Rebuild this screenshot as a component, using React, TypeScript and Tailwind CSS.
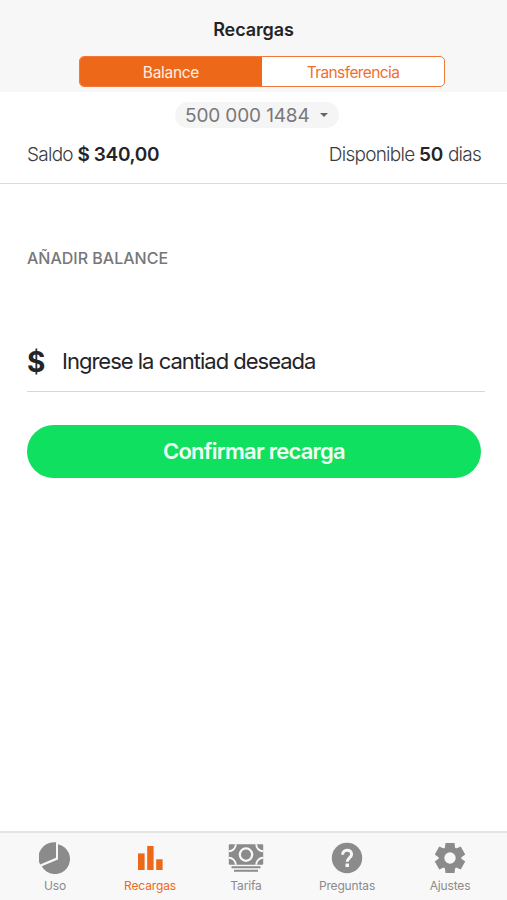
import type { ReactNode } from "react";

function PieIcon() {
  return (
    <svg width="32" height="32" viewBox="0 0 32 32" fill="currentColor">
      <path d="M17 .3V15.800L1.100 22.500A15.500 15.500 0 0 1 17 .3Z" />
      <path d="M19 2.200A15.100 15.100 0 1 1 2.700 24.300L19 17.400Z" />
    </svg>
  );
}

function BarsIcon() {
  return (
    <svg width="26" height="32" viewBox="0 0 26 32" fill="currentColor">
      <rect x="1" y="11.400" width="6.600" height="16.600" />
      <rect x="10.200" y="4" width="6.400" height="24" />
      <rect x="19.200" y="17.300" width="6.400" height="10.700" />
    </svg>
  );
}

function MoneyIcon() {
  return (
    <svg width="36" height="32" viewBox="0 0 36 32" fill="none">
      <clipPath id="note">
        <rect x=".8" y="2.300" width="34.400" height="20.500" rx="1" />
      </clipPath>
      <g clipPath="url(#note)">
        <rect width="36" height="24" fill="currentColor" />
        <g stroke="#f8f8f8" strokeWidth="1.900">
          <circle cx="18" cy="12.600" r="6.200" strokeWidth="2.300" />
          <circle cx=".8" cy="2.300" r="7" />
          <circle cx="35.200" cy="2.300" r="7" />
          <circle cx=".8" cy="22.800" r="7" />
          <circle cx="35.200" cy="22.800" r="7" />
        </g>
      </g>
      <path d="M3.500 25.200H32.500M6 28.800H30" stroke="currentColor" strokeWidth="2.100" />
    </svg>
  );
}

function HelpIcon() {
  return (
    <svg width="32" height="32" viewBox="0 0 32 32" fill="none">
      <circle cx="16" cy="16" r="15.200" fill="currentColor" />
      <path d="M11.600 12.700C11.600 6.700 20.600 6.700 20.600 12.300C20.600 15.700 16.200 16 16.200 19.800" stroke="#f8f8f8" strokeWidth="3" />
      <rect x="14.500" y="21.500" width="3.500" height="3.400" rx=".5" fill="#f8f8f8" />
    </svg>
  );
}

function GearIcon() {
  return (
    <svg width="32" height="32" viewBox="-16 -16 32 32" fill="currentColor">
      <circle r="11.200" />
      {[0, 60, 120, 180, 240, 300].map((a) => (
        <path key={a} d="M-5.300-9L-4.500-15H4.500L5.300-9Z" transform={`rotate(${a})`} />
      ))}
      <circle r="5.700" fill="#f8f8f8" />
    </svg>
  );
}

function Tab({ icon, label, className }: { icon: ReactNode; label: string; className: string }) {
  return (
    <button className={`flex flex-col items-center ${className}`}>
      {icon}
      <span className="mt-[3px] text-[12px] leading-[18px] tracking-[-0.15px] whitespace-nowrap">{label}</span>
    </button>
  );
}

export default function App() {
  return (
    <div className="flex h-[900px] w-[507px] flex-col bg-white font-['Inter',sans-serif] text-[#242428]">
      <header className="flex h-[92px] flex-col bg-[#f7f7f7] pt-[18px]">
        <h1 className="text-center text-[18px] leading-6 font-semibold tracking-[-0.1px]">Recargas</h1>
        <div className="mt-[14px] ml-[79px] flex h-[31px] w-[366px] overflow-hidden rounded-[5px] border-[1.500px] border-[#f07838] bg-white text-[15.500px]">
          <button className="w-[182px] bg-[#ee681a] pt-[2px] tracking-[-0.300px] text-[#fff0e5]">Balance</button>
          <button className="flex-1 pt-[2px] tracking-[-0.600px] text-[#f07030]">Transferencia</button>
        </div>
      </header>
      <section className="flex h-[92px] flex-col border-b border-[#dcdcdc] pt-[10px]">
        <button className="ml-[175px] flex h-[26px] w-[164px] items-center rounded-full bg-[#f5f5f5] pl-[10px] text-[19px] tracking-[-0.130px] whitespace-nowrap text-[#78787a]">
          <span className="pt-[2px]">500 000 1484</span>
          <span className="ml-[10px] border-x-4 border-t-4 border-x-transparent border-t-[#666]" />
        </button>
        <div className="mt-[13px] flex justify-between pr-[26px] pl-[27px] text-[19px] leading-7 font-light tracking-[-0.750px] text-[#3c3c40]">
          <p>Saldo <b className="font-semibold tracking-[-0.350px] text-[#242428]">$ 340,00</b></p>
          <p>Disponible <b className="font-semibold tracking-[-0.100px] text-[#242428]">50</b> dias</p>
        </div>
      </section>
      <main className="flex-1 pt-[62px] pr-[22px] pl-[27px]">
        <h2 className="text-[16px] leading-6 font-medium text-[#77777a]">AÑADIR BALANCE</h2>
        <div className="mt-[62px] flex h-[60px] items-center border-b border-[#d8d8d8]">
          <span className="w-[35px] text-[28px] font-bold">$</span>
          <span className="text-[22px] tracking-[-1px] whitespace-nowrap">Ingrese la cantiad deseada</span>
        </div>
        <button className="mt-[33px] h-[53px] w-[454px] rounded-full bg-[#10e060] text-[22px] font-semibold tracking-[-0.750px] text-[#f0fff5]">Confirmar recarga</button>
      </main>
      <nav className="flex h-[69px] border-t-2 border-[#e4e4e4] bg-[#f8f8f8] pt-[9px] pl-[15px] text-[#8b8b8b]">
        <Tab className="w-[80px]" icon={<PieIcon />} label="Uso" />
        <Tab className="w-[110px] text-[#ee681a]" icon={<BarsIcon />} label="Recargas" />
        <Tab className="w-[82px]" icon={<MoneyIcon />} label="Tarifa" />
        <Tab className="w-[120px]" icon={<HelpIcon />} label="Preguntas" />
        <Tab className="w-[86px]" icon={<GearIcon />} label="Ajustes" />
      </nav>
    </div>
  );
}
